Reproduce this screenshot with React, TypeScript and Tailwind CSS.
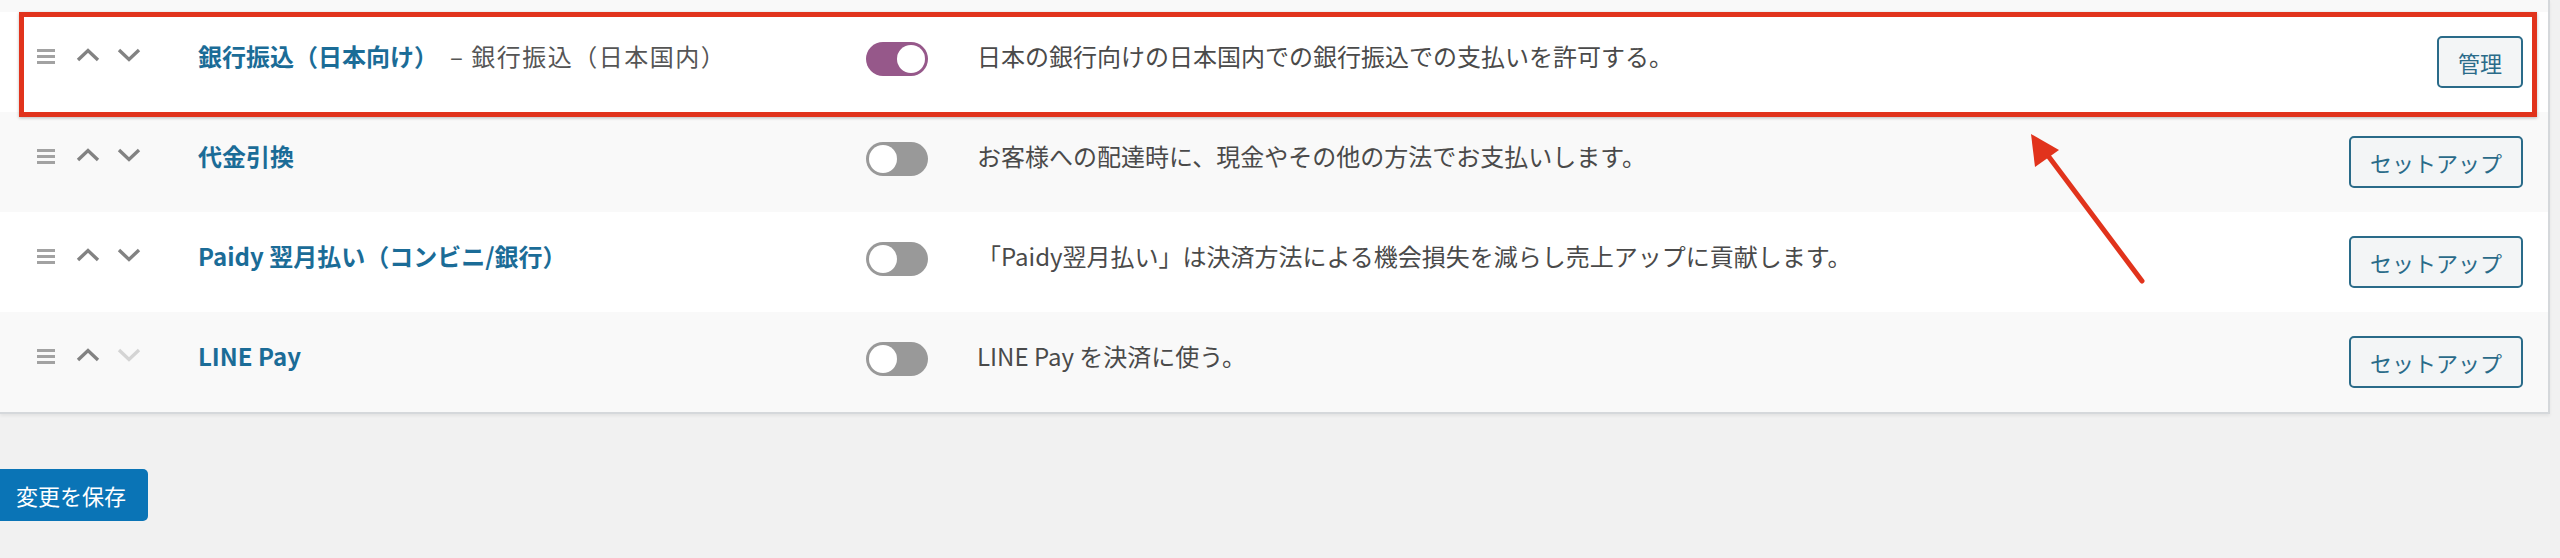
import React from "react";

const FONT = { fontFamily: '"Noto Sans CJK JP", "Noto Sans", sans-serif' };

function Hamburger() {
  return (
    <svg width="18" height="15" viewBox="0 0 18 15" className="block">
      <rect x="0" y="0" width="18" height="3" fill="#a2a2a2" />
      <rect x="0" y="6" width="18" height="3" fill="#a2a2a2" />
      <rect x="0" y="12" width="18" height="3" fill="#a2a2a2" />
    </svg>
  );
}

function Chevron({ up, disabled }: { up?: boolean; disabled?: boolean }) {
  return (
    <svg width="24" height="14" viewBox="0 0 24 14" className="block">
      <polyline
        points={up ? "2,12 12,2.5 22,12" : "2,2 12,11.5 22,2"}
        fill="none"
        stroke={disabled ? "#d4d4d4" : "#828282"}
        strokeWidth="3.4"
        strokeLinecap="butt"
        strokeLinejoin="miter"
      />
    </svg>
  );
}

function Toggle({ on }: { on?: boolean }) {
  return (
    <div
      className={`w-[62px] h-[34px] rounded-full flex items-center px-[3px] ${
        on ? "bg-[#96588a] justify-end" : "bg-[#999999] justify-start"
      }`}
    >
      <div className="w-[28px] h-[28px] rounded-full bg-white" />
    </div>
  );
}

type Row = {
  title: string;
  sub?: string;
  desc: string;
  on?: boolean;
  button: string;
  bg: string;
  lastDisabled?: boolean;
};

const rows: Row[] = [
  {
    title: "銀行振込（日本向け）",
    sub: "– 銀行振込（日本国内）",
    desc: "日本の銀行向けの日本国内での銀行振込での支払いを許可する。",
    on: true,
    button: "管理",
    bg: "bg-white",
  },
  {
    title: "代金引換",
    desc: "お客様への配達時に、現金やその他の方法でお支払いします。",
    button: "セットアップ",
    bg: "bg-[#f9f9f9]",
  },
  {
    title: "Paidy 翌月払い（コンビニ/銀行）",
    desc: "「Paidy翌月払い」は決済方法による機会損失を減らし売上アップに貢献します。",
    button: "セットアップ",
    bg: "bg-white",
  },
  {
    title: "LINE Pay",
    desc: "LINE Pay を決済に使う。",
    button: "セットアップ",
    bg: "bg-[#f9f9f9]",
    lastDisabled: true,
  },
];

export default function App() {
  return (
    <div
      className="relative w-[2560px] h-[558px] overflow-hidden bg-[#f1f1f1]"
      style={FONT}
    >
      <div className="w-[2550px] bg-white border-r-[2px] border-b-[2px] border-[#d5d8db] shadow-[0_2px_3px_rgba(0,0,0,0.06)]">
        <div className="h-[12px] bg-[#f9f9f9]" />
        {rows.map((r, i) => (
          <div key={i} className={`flex h-[100px] ${r.bg}`}>
            <div className="w-[198px] shrink-0 pl-[37px] pt-[37px] flex items-start">
              <Hamburger />
              <div className="ml-[21px] -mt-[1px]">
                <Chevron up />
              </div>
              <div className="ml-[17px] -mt-[1px]">
                <Chevron disabled={r.lastDisabled} />
              </div>
            </div>
            <div className="w-[668px] shrink-0 pt-[27px] text-[24px] leading-[34px] whitespace-nowrap">
              <span className="font-bold text-[#1b6c97]">{r.title}</span>
              {r.sub && (
                <span className="ml-[12px] tracking-[1.5px] text-[#555555]">
                  {r.sub}
                </span>
              )}
            </div>
            <div className="w-[111px] shrink-0 pt-[30px]">
              <Toggle on={r.on} />
            </div>
            <div className="flex-1 pt-[27px] text-[24px] leading-[34px] text-[#4a4a4a] whitespace-nowrap">
              {r.desc}
            </div>
            <div className="shrink-0 pr-[25px] pt-[24px]">
              <button className="h-[52px] px-[19px] rounded-[5px] border-[2px] border-[#2a6b89] bg-[#f3f5f6] text-[#2a6b89] text-[22px] leading-[48px]">
                {r.button}
              </button>
            </div>
          </div>
        ))}
      </div>

      <div className="mt-[55px]">
        <button className="h-[52px] w-[148px] pl-[16px] text-left rounded-r-[5px] bg-[#0a74b6] text-white text-[22px] leading-[52px]">
          変更を保存
        </button>
      </div>

      {/* annotation: highlight box */}
      <div className="absolute left-[19px] top-[12px] w-[2518px] h-[105px] border-[5px] border-[#e1331c] shadow-[0_1px_3px_rgba(0,0,0,0.25)] pointer-events-none" />

      {/* annotation: arrow */}
      <svg
        className="absolute left-0 top-0 pointer-events-none"
        width="2560"
        height="558"
        viewBox="0 0 2560 558"
      >
        <line
          x1="2142"
          y1="281"
          x2="2046"
          y2="153"
          stroke="#e1331c"
          strokeWidth="5"
          strokeLinecap="round"
        />
        <polygon points="2031,134 2035,167 2059,150" fill="#e1331c" />
      </svg>
    </div>
  );
}
